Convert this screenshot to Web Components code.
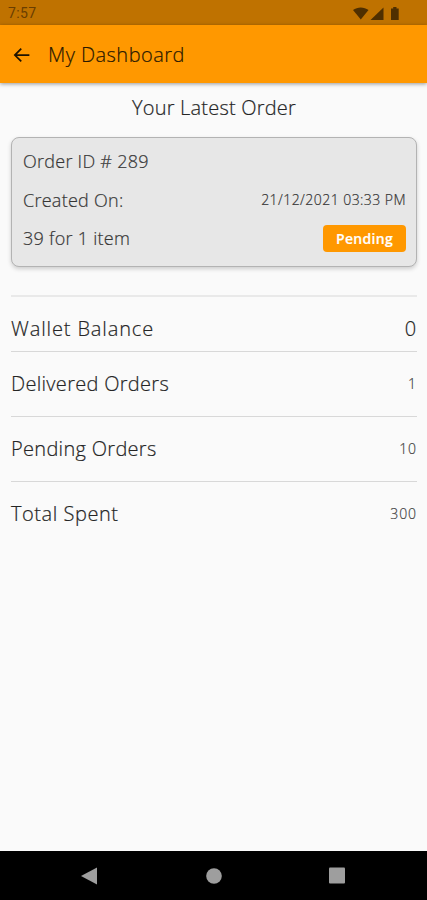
<!DOCTYPE html>
<html lang="en">
<head>
<meta charset="utf-8">
<meta name="viewport" content="width=device-width, initial-scale=1">
<title>My Dashboard</title>
<style>
    body {
        margin: 0;
        background: #fafafa;
        color: #252525;
        font-family: "Open Sans", "Noto Sans", sans-serif;
        font-weight: 300;
        -webkit-text-stroke: 0.2px;
    }
</style>
</head>
<body>
<dashboard-page>
    <status-bar slot="top">7:57</status-bar>
    <app-bar slot="top">My Dashboard</app-bar>

    <order-card order="289" created="21/12/2021 03:33 PM" summary="39 for 1 item" status="Pending">Your Latest Order</order-card>

    <stat-row class="wallet" label="Wallet Balance" value="0"></stat-row>
    <stat-row label="Delivered Orders" value="1"></stat-row>
    <stat-row label="Pending Orders" value="10"></stat-row>
    <stat-row class="total" label="Total Spent" value="300"></stat-row>

    <nav-bar slot="bottom"></nav-bar>
</dashboard-page>

<script>
const dashboard_page = document.createElement('template');
dashboard_page.innerHTML = `
    <style>
        :host {
            display: flex;
            flex-direction: column;
            height: 100vh;
            overflow: hidden;
        }
        main {
            flex: 1;
            padding: 0 10px 0 11px;
        }
        header {
            z-index: 1;
        }
    </style>
    <header><slot name="top"></slot></header>
    <main><slot></slot></main>
    <slot name="bottom"></slot>
`

const status_bar = document.createElement('template');
status_bar.innerHTML = `
    <style>
        :host {
            display: flex;
            justify-content: space-between;
            align-items: center;
            box-sizing: border-box;
            height: 25px;
            padding: 1px 27px 0 8px;
            background: #bf7200;
            color: #6a3e00;
            font: 400 14px/24px Roboto, sans-serif;
            letter-spacing: 0.4px;
            -webkit-text-stroke: 0;
        }
        svg {
            display: block;
            fill: #4f2f00;
        }
    </style>
    <slot></slot>
    <svg width="47" height="15" viewBox="0 0 47 15">
        <path d="M0 4C4.5 .6 11 .6 15.500 4L7.800 13.500z"/>
        <path d="M30.500 1.500V14H17.500z"/>
        <path d="M38 2.500h2.200V1h3.300v1.500h2.200V14H38z"/>
    </svg>
`

const app_bar = document.createElement('template');
app_bar.innerHTML = `
    <style>
        :host {
            display: flex;
            align-items: center;
            gap: 16px;
            box-sizing: border-box;
            height: 58px;
            padding: 1px 11px 0;
            background: #ff9800;
            color: #2a1900;
            box-shadow: 0 1px 4px rgba(0, 0, 0, 0.4);
            font-size: 20px;
            line-height: 24px;
            letter-spacing: 0.45px;
        }
        svg {
            display: block;
            fill: #1f1300;
        }
    </style>
    <svg width="21" height="22" viewBox="0 0 24 24"><path d="M21 11H6.830l5.580-5.590L11 4l-8 8 8 8 1.410-1.410L6.830 13H21z"/></svg>
    <slot></slot>
`

const order_card = document.createElement('template');
order_card.innerHTML = `
    <style>
        :host {
            display: block;
            padding-top: 13px;
        }
        h2 {
            margin: 0 0 17px;
            font-size: 20px;
            font-weight: inherit;
            line-height: 24px;
            letter-spacing: 0.2px;
            text-align: center;
        }
        .card {
            box-sizing: border-box;
            height: 130px;
            padding: 4px 10px 0 11px;
            border: 1px solid #b3b3b3;
            border-radius: 8px;
            background: #e7e7e7;
            box-shadow: 0 2px 4px rgba(0, 0, 0, 0.18);
            color: #363636;
            font-size: 18px;
            line-height: 38px;
            letter-spacing: 0.26px;
        }
        .line {
            display: flex;
            justify-content: space-between;
            align-items: center;
            height: 38.5px;
        }
        #created {
            font-size: 14px;
            letter-spacing: 0.45px;
        }
        #status {
            width: 83px;
            border-radius: 4px;
            background: #ff9800;
            color: #fff;
            font-size: 14px;
            font-weight: 600;
            line-height: 27px;
            letter-spacing: 0.3px;
            text-align: center;
        }
    </style>
    <h2><slot></slot></h2>
    <div class="card">
        <div class="line"><span id="order"></span></div>
        <div class="line"><span>Created On:</span><span id="created"></span></div>
        <div class="line"><span id="summary"></span><span id="status"></span></div>
    </div>
`

const stat_row = document.createElement('template');
stat_row.innerHTML = `
    <style>
        :host {
            display: flex;
            justify-content: space-between;
            align-items: center;
            box-sizing: border-box;
            height: 65px;
            border-top: 1px solid #d8d8d8;
            font-size: 20px;
            line-height: 24px;
            letter-spacing: 0.3px;
        }
        :host(.wallet) {
            height: 56px;
            margin-top: 28px;
            padding-top: 9px;
            border-top: 2px solid #e9e9e9;
            letter-spacing: 0.87px;
        }
        :host(.total) {
            letter-spacing: 0.55px;
        }
        #value {
            color: #444;
            font-size: 14px;
            letter-spacing: 0.9px;
        }
        :host(.wallet) #value {
            color: inherit;
            font-size: 20px;
        }
    </style>
    <span id="label"></span>
    <span id="value"></span>
`

const nav_bar = document.createElement('template');
nav_bar.innerHTML = `
    <style>
        :host {
            display: flex;
            justify-content: space-between;
            align-items: center;
            box-sizing: border-box;
            height: 49px;
            padding: 0 82px 0 81px;
            background: #000;
        }
        svg {
            display: block;
            fill: #9e9e9e;
        }
    </style>
    <svg width="17" height="18"><path d="M0 9L16 .5v17z"/></svg>
    <svg width="16" height="16"><circle cx="8" cy="8" r="7.800"/></svg>
    <svg width="16" height="17"><rect y=".5" width="16" height="16" rx="1"/></svg>
`

class BaseElement extends HTMLElement {
    constructor(template) {
        super();
        this.attachShadow({mode: 'open'});
        this.shadowRoot.appendChild(template.content.cloneNode(true));
    }

    setText(id, text) {
        this.shadowRoot.getElementById(id).textContent = text;
    }
}

class DashboardPage extends BaseElement {
    constructor() {
        super(dashboard_page);
    }
}

class StatusBar extends BaseElement {
    constructor() {
        super(status_bar);
    }
}

class AppBar extends BaseElement {
    constructor() {
        super(app_bar);
    }
}

class OrderCard extends BaseElement {
    constructor() {
        super(order_card);
    }

    connectedCallback() {
        this.setText('order', `Order ID # ${this.getAttribute('order')}`);
        this.setText('created', this.getAttribute('created'));
        this.setText('summary', this.getAttribute('summary'));
        this.setText('status', this.getAttribute('status'));
    }
}

class StatRow extends BaseElement {
    constructor() {
        super(stat_row);
    }

    connectedCallback() {
        this.setText('label', this.getAttribute('label'));
        this.setText('value', this.getAttribute('value'));
    }
}

class NavBar extends BaseElement {
    constructor() {
        super(nav_bar);
    }
}

window.customElements.define('dashboard-page', DashboardPage)
window.customElements.define('status-bar', StatusBar)
window.customElements.define('app-bar', AppBar)
window.customElements.define('order-card', OrderCard)
window.customElements.define('stat-row', StatRow)
window.customElements.define('nav-bar', NavBar)
</script>
</body>
</html>
